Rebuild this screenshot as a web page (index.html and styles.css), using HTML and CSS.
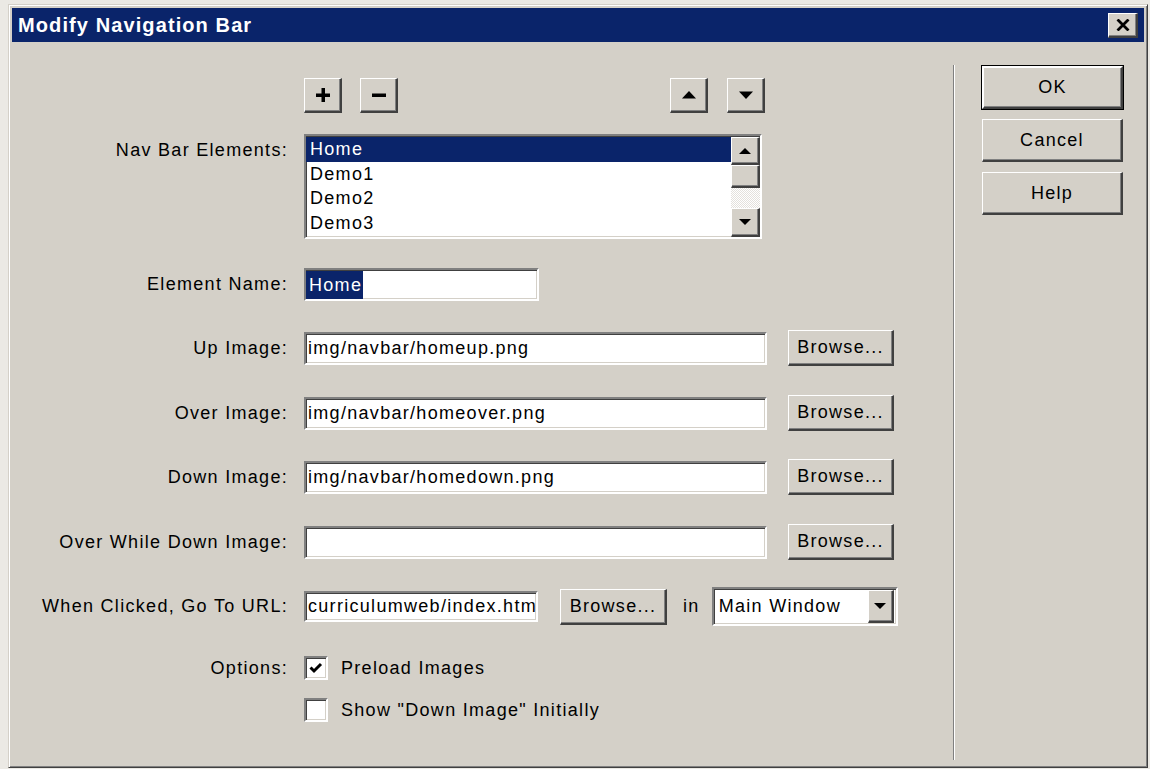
FILE: index.html
```html
<!DOCTYPE html>
<html lang="en">
<head>
<meta charset="utf-8">
<title>Modify Navigation Bar</title>
<link rel="stylesheet" href="styles.css">
</head>
<body>
<div class="window">
  <div class="titlebar">
    <span class="title">Modify Navigation Bar</span>
    <button class="close" aria-label="Close">
      <svg width="14" height="12" viewBox="0 0 14 12"><path d="M1.5 0.5 L12.5 11.5 M12.5 0.5 L1.5 11.5" stroke="#000" stroke-width="2.8" fill="none"/></svg>
    </button>
  </div>
  <div class="body">
    <div class="form">
      <div class="row toolbar-row">
        <span class="label"></span>
        <div class="toolbar">
          <div class="group">
            <button class="btn tool" aria-label="Add">
              <svg width="14" height="14" viewBox="0 0 14 14"><rect x="5.5" y="0" width="3.5" height="14"/><rect x="0" y="5.5" width="14" height="3.5"/></svg>
            </button>
            <button class="btn tool" aria-label="Remove">
              <svg width="14" height="14" viewBox="0 0 14 14"><rect x="0" y="5.5" width="14" height="3.5"/></svg>
            </button>
          </div>
          <div class="group">
            <button class="btn tool" aria-label="Move up">
              <svg width="14" height="8" viewBox="0 0 14 8"><path d="M7 0 L14 7.5 L0 7.5 Z"/></svg>
            </button>
            <button class="btn tool" aria-label="Move down">
              <svg width="14" height="8" viewBox="0 0 14 8"><path d="M0 0.5 L14 0.5 L7 8 Z"/></svg>
            </button>
          </div>
        </div>
      </div>

      <div class="row list-row">
        <span class="label">Nav Bar Elements:</span>
        <div class="listbox">
          <ul class="items">
            <li class="selected">Home</li>
            <li>Demo1</li>
            <li>Demo2</li>
            <li>Demo3</li>
          </ul>
          <div class="scrollbar">
            <div class="btn sb-btn sb-up">
              <svg width="12" height="6" viewBox="0 0 12 6"><path d="M6 0 L12 6 L0 6 Z"/></svg>
            </div>
            <div class="btn sb-thumb"></div>
            <div class="sb-track"></div>
            <div class="btn sb-btn sb-down">
              <svg width="12" height="6" viewBox="0 0 12 6"><path d="M0 0 L12 0 L6 6 Z"/></svg>
            </div>
          </div>
        </div>
      </div>

      <div class="row name-row">
        <span class="label">Element Name:</span>
        <div class="field name-field"><span class="sel">Home</span></div>
      </div>

      <div class="row image-row">
        <span class="label">Up Image:</span>
        <div class="field wide">img/navbar/homeup.png</div>
        <button class="btn browse">Browse...</button>
      </div>

      <div class="row image-row">
        <span class="label">Over Image:</span>
        <div class="field wide">img/navbar/homeover.png</div>
        <button class="btn browse">Browse...</button>
      </div>

      <div class="row image-row tight">
        <span class="label">Down Image:</span>
        <div class="field wide">img/navbar/homedown.png</div>
        <button class="btn browse">Browse...</button>
      </div>

      <div class="row image-row">
        <span class="label">Over While Down Image:</span>
        <div class="field wide"></div>
        <button class="btn browse">Browse...</button>
      </div>

      <div class="row url-row">
        <span class="label">When Clicked, Go To URL:</span>
        <div class="field url-field">curriculumweb/index.htm</div>
        <button class="btn browse url-browse">Browse...</button>
        <span class="in">in</span>
        <div class="select">
          <span class="select-text">Main Window</span>
          <div class="btn select-btn">
            <svg width="12" height="6" viewBox="0 0 12 6"><path d="M0 0 L12 0 L6 6 Z"/></svg>
          </div>
        </div>
      </div>

      <div class="row option-row">
        <span class="label">Options:</span>
        <span class="checkbox checked">
          <svg width="14" height="12" viewBox="0 0 14 12"><path d="M1.5 5.5 L5 9 L12 2" stroke="#000" stroke-width="3" fill="none"/></svg>
        </span>
        <span class="opt-text">Preload Images</span>
      </div>

      <div class="row option-row second">
        <span class="label"></span>
        <span class="checkbox"></span>
        <span class="opt-text">Show "Down Image" Initially</span>
      </div>
    </div>

    <div class="separator"></div>

    <div class="actions">
      <button class="btn action default">OK</button>
      <button class="btn action">Cancel</button>
      <button class="btn action">Help</button>
    </div>
  </div>
</div>
</body>
</html>
```

FILE: styles.css
```css
* {
  box-sizing: border-box;
}

html,
body {
  margin: 0;
  height: 100%;
}

body {
  background: #ebe9e4;
  font-family: "Liberation Sans", Arial, sans-serif;
  font-size: 18px;
  letter-spacing: 1.3px;
  color: #000;
  overflow: hidden;
}

button {
  font: inherit;
  letter-spacing: inherit;
  color: inherit;
  padding: 0;
  margin: 0;
  cursor: default;
}

/* dialog frame */
.window {
  margin: 4px 0 0 8px;
  width: 1140px;
  height: 764px;
  background: #d4d0c8;
  border: 1px solid;
  border-color: #d4d0c8 #404040 #404040 #d4d0c8;
  box-shadow: inset 1px 1px #fff, inset -1px -1px #808080;
  padding: 3px;
  display: flex;
  flex-direction: column;
}

.titlebar {
  height: 34px;
  flex: none;
  background: #0a246a;
  display: flex;
  align-items: center;
  justify-content: space-between;
  padding: 0 6px 0 6px;
}

.title {
  color: #fff;
  font-weight: bold;
  font-size: 20px;
  letter-spacing: 1.1px;
}

/* raised 3D surface */
.btn {
  background: #d4d0c8;
  border-style: solid;
  border-width: 1px 2px 2px 1px;
  border-color: #fff #404040 #404040 #fff;
  box-shadow: inset -1px -1px #808080;
  display: flex;
  align-items: center;
  justify-content: center;
}

.close {
  width: 30px;
  height: 25px;
  background: #d4d0c8;
  border-style: solid;
  border-width: 1px 2px 2px 1px;
  border-color: #fff #404040 #404040 #fff;
  box-shadow: inset -1px -1px #808080;
  display: flex;
  align-items: center;
  justify-content: center;
}

.body {
  flex: 1;
  display: flex;
  min-height: 0;
}

/* left side: labelled controls */
.form {
  width: 941px;
  flex: none;
  display: flex;
  flex-direction: column;
}

.row {
  display: flex;
  align-items: center;
  gap: 16px;
}

.label {
  width: 276px;
  flex: none;
  text-align: right;
  white-space: nowrap;
}

.toolbar-row {
  margin-top: 36px;
  height: 35px;
}

.toolbar {
  width: 461px;
  display: flex;
  justify-content: space-between;
}

.group {
  display: flex;
  gap: 18px;
}

.group + .group {
  gap: 19px;
}

.tool {
  width: 38px;
  height: 35px;
}

.tool svg {
  fill: #000;
}

/* sunken white well */
.field,
.listbox,
.checkbox,
.select {
  background: #fff;
  border: 2px solid;
  border-color: #808080 #fff #fff #808080;
  box-shadow: inset 1px 1px #404040, inset -1px -1px #d4d0c8;
}

.list-row {
  margin-top: 21px;
  align-items: flex-start;
}

.list-row .label {
  padding-top: 4px;
  line-height: 24px;
}

.listbox {
  width: 458px;
  height: 105px;
  display: flex;
}

.items {
  list-style: none;
  margin: 0;
  padding: 1px 0 0 0;
  flex: 1;
}

.items li {
  height: 24.5px;
  line-height: 24px;
  padding-left: 4px;
}

.items li.selected {
  background: #0a246a;
  color: #fff;
}

.scrollbar {
  width: 29px;
  flex: none;
  display: flex;
  flex-direction: column;
  padding-top: 1px;
}

.sb-btn svg,
.select-btn svg {
  fill: #000;
}

.sb-up {
  height: 28px;
}

.sb-thumb {
  height: 23px;
}

.sb-track {
  height: 20px;
  background: repeating-conic-gradient(#e4e1dc 0 25%, #fff 0 50%) 0 0 / 2px 2px;
}

.sb-down {
  height: 29px;
}

.field {
  height: 33px;
  padding: 0 2px;
  display: flex;
  align-items: center;
  white-space: nowrap;
  overflow: hidden;
}

.name-row {
  margin-top: 29px;
  height: 33px;
}

.name-field {
  width: 235px;
  padding: 0;
}

.sel {
  background: #0a246a;
  color: #fff;
  line-height: 28px;
  padding: 0 1px 0 3px;
}

.image-row {
  margin-top: 29px;
  height: 36px;
  gap: 16px;
}

.image-row.tight {
  margin-top: 28px;
}

.image-row .browse {
  margin-left: 5px;
}

.wide {
  width: 463px;
}

.browse {
  width: 106px;
  height: 36px;
}

.url-row {
  margin-top: 27px;
  height: 39px;
}

.url-field {
  width: 234px;
  height: 31px;
}

.url-browse {
  width: 107px;
  margin-left: 6px;
}

.in {
  margin-right: -4px;
}

.select {
  width: 186px;
  height: 39px;
  display: flex;
  align-items: center;
  padding: 1px;
}

.select-text {
  flex: 1;
  padding-left: 4px;
}

.select-btn {
  width: 26px;
  height: 33px;
  margin-right: 1px;
}

.option-row {
  margin-top: 30px;
  height: 24px;
  gap: 16px;
}

.option-row.second {
  margin-top: 18px;
}

.checkbox {
  width: 24px;
  height: 24px;
  flex: none;
  display: flex;
  align-items: flex-start;
  justify-content: flex-start;
  padding: 4px 0 0 3px;
  margin-right: -3px;
}

/* vertical etched divider */
.separator {
  width: 2px;
  flex: none;
  margin: 23px 0 4px 0;
  border-left: 1px solid #808080;
  border-right: 1px solid #fff;
}

/* right side: dialog buttons */
.actions {
  padding: 24px 0 0 27px;
  display: flex;
  flex-direction: column;
  gap: 10px;
}

.action {
  width: 141px;
  height: 43px;
}

.action.default {
  outline: 1px solid #000;
  outline-offset: 0;
  border-width: 2px;
  border-color: #fff #404040 #404040 #fff;
}
```
